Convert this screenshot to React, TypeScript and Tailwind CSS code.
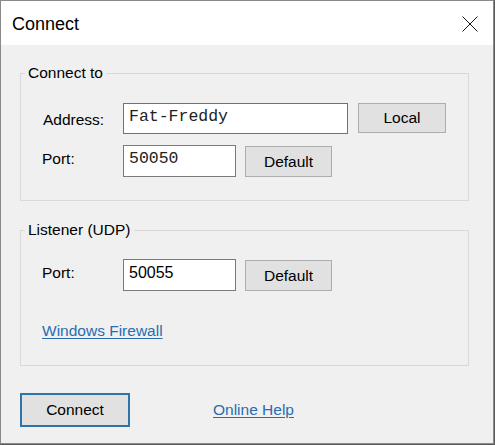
const sans = { fontFamily: '"Liberation Sans", Arial, sans-serif' }

function Field({
    value,
    width,
    mono = false,
    focused = false,
}: {
    value: string
    width: string
    mono?: boolean
    focused?: boolean
}) {
    return (
        <input
            readOnly
            value={value}
            className={`${width} h-[32px] bg-white pl-[5px] pb-[5px] outline-none ${
                focused ? 'border border-[#3a82ad]' : 'border border-[#7a7a7a]'
            } ${mono ? 'font-["Liberation_Mono",monospace] text-[16.5px] text-[#222]' : 'font-["Liberation_Sans",sans-serif] text-[16px] text-black'}`}
        />
    )
}

function Button({ label, width, primary = false }: { label: string; width: string; primary?: boolean }) {
    return (
        <button
            className={`${width} bg-[#e1e1e1] text-black text-[15.5px] leading-none ${
                primary ? 'h-[34px] border-2 border-[#2f74a8]' : 'h-[31px] border border-[#adadad]'
            }`}
        >
            {label}
        </button>
    )
}

export default function App() {
    return (
        <div className="w-[495px] h-[445px] bg-[#5a5a5a]" style={sans}>
            <div className="w-[494px] h-[444px] flex flex-col border border-[#8a8a8a] text-black">
                {/* Title bar */}
                <div className="h-[44px] bg-white flex items-center justify-between pl-[11px] pr-[15px] pt-[2px]">
                    <span className="text-[18px]">Connect</span>
                    <svg width="16" height="16" viewBox="0 0 16 16" className="-mt-[1px]">
                        <path d="M0.5 0.5 L15.5 15.5 M15.5 0.5 L0.5 15.5" stroke="#111" strokeWidth="1" fill="none" />
                    </svg>
                </div>

                {/* Dialog body */}
                <div className="flex-1 bg-[#f0f0f0] px-[19px] text-[15.5px]">
                    <fieldset className="mt-[19px] w-[449px] border border-[#d9d9d9] pb-[23px]">
                        <legend className="ml-[4px] px-[3px] leading-[18px]">Connect to</legend>
                        <div className="mt-[21px] flex items-start">
                            <span className="w-[102px] pl-[22px] pt-[5px]">Address:</span>
                            <Field value="Fat-Freddy" width="w-[225px] !h-[31px]" mono focused />
                            <div className="ml-[10px]">
                                <Button label="Local" width="w-[88px] !h-[30px]" />
                            </div>
                        </div>
                        <div className="mt-[11px] flex items-end">
                            <span className="w-[102px] pl-[21px] pb-[7px]">Port:</span>
                            <Field value="50050" width="w-[113px]" mono />
                            <div className="ml-[9px]">
                                <Button label="Default" width="w-[87px]" />
                            </div>
                        </div>
                    </fieldset>

                    <fieldset className="mt-[20px] w-[449px] border border-[#d9d9d9] pb-[25px]">
                        <legend className="ml-[4px] px-[3px] leading-[18px]">Listener (UDP)</legend>
                        <div className="mt-[20px] flex items-end">
                            <span className="w-[102px] pl-[21px] pb-[7px]">Port:</span>
                            <Field value="50055" width="w-[113px]" />
                            <div className="ml-[9px]">
                                <Button label="Default" width="w-[87px]" />
                            </div>
                        </div>
                        <div className="mt-[31px] pl-[21px] leading-[18px]">
                            <a className="text-[#2b6cb0] underline underline-offset-2 cursor-pointer">Windows Firewall</a>
                        </div>
                    </fieldset>

                    {/* Footer */}
                    <div className="mt-[27px] flex items-center">
                        <Button label="Connect" width="w-[110px]" primary />
                        <a className="ml-[83px] text-[#2b6cb0] underline underline-offset-2 cursor-pointer leading-[18px]">
                            Online Help
                        </a>
                    </div>
                </div>
            </div>
        </div>
    )
}
